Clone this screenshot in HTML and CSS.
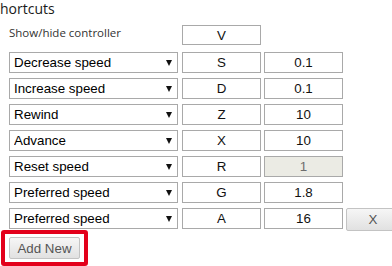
FILE: index.html
```html
<!DOCTYPE html>
<html>
<head>
<meta charset="utf-8">
<link rel="stylesheet" href="styles.css">
</head>
<body>
<div class="page">
  <h3 class="title">hortcuts</h3>
  <div class="shortcuts">
    <div class="row first">
      <span class="label">Show/hide controller</span>
      <input class="key" type="text" value="V">
    </div>
    <div class="row">
      <span class="sel"><select><option>Decrease speed</option></select></span>
      <input class="key" type="text" value="S">
      <input class="val" type="text" value="0.1">
    </div>
    <div class="row">
      <span class="sel"><select><option>Increase speed</option></select></span>
      <input class="key" type="text" value="D">
      <input class="val" type="text" value="0.1">
    </div>
    <div class="row">
      <span class="sel"><select><option>Rewind</option></select></span>
      <input class="key" type="text" value="Z">
      <input class="val" type="text" value="10">
    </div>
    <div class="row">
      <span class="sel"><select><option>Advance</option></select></span>
      <input class="key" type="text" value="X">
      <input class="val" type="text" value="10">
    </div>
    <div class="row">
      <span class="sel"><select><option>Reset speed</option></select></span>
      <input class="key" type="text" value="R">
      <input class="val" type="text" value="1" disabled>
    </div>
    <div class="row">
      <span class="sel"><select><option>Preferred speed</option></select></span>
      <input class="key" type="text" value="G">
      <input class="val" type="text" value="1.8">
    </div>
    <div class="row">
      <span class="sel"><select><option>Preferred speed</option></select></span>
      <input class="key" type="text" value="A">
      <input class="val" type="text" value="16">
      <button class="btn remove">X</button>
    </div>
  </div>
  <div class="highlight">
    <button class="btn add">Add New</button>
  </div>
</div>
</body>
</html>
```
FILE: styles.css
```css
html, body {
  margin: 0;
  padding: 0;
  background: #fff;
  overflow: hidden;
}
.page {
  width: 392px;
  height: 266px;
  overflow: hidden;
  font-family: "Liberation Sans", Arial, sans-serif;
}
.title {
  margin: 0;
  padding-top: 1px;
  height: 19px;
  font-family: "Open Sans", sans-serif;
  font-weight: normal;
  font-size: 14px;
  line-height: 15px;
  color: #1a1a1a;
}
.shortcuts {
  padding-left: 9px;
  padding-top: 5px;
  display: flex;
  flex-direction: column;
  gap: 5px;
}
.row {
  display: flex;
  align-items: flex-start;
  height: 21px;
}
.row.first {
  margin-bottom: 1px;
}
.label {
  width: 173px;
  font-family: "Open Sans", sans-serif;
  font-size: 11.5px;
  line-height: 13px;
  padding-top: 1px;
  color: #333;
}
.sel {
  position: relative;
  display: block;
  width: 169px;
  margin-right: 4px;
}
.sel select {
  -webkit-appearance: none;
  appearance: none;
  display: block;
  width: 169px;
  height: 21px;
  margin: 0;
  padding: 0 0 0 4px;
  border: 1px solid #a9a9a9;
  border-radius: 0;
  background: #fff;
  font-family: "Liberation Sans", Arial, sans-serif;
  font-size: 13.33px;
  color: #000;
}
.sel::after {
  content: "";
  position: absolute;
  right: 6px;
  top: 8px;
  width: 0;
  height: 0;
  border-left: 3.5px solid transparent;
  border-right: 3.5px solid transparent;
  border-top: 6px solid #111;
  pointer-events: none;
}
input {
  box-sizing: border-box;
  height: 21px;
  width: 79px;
  margin: 0 3px 0 0;
  padding: 0;
  border: 1px solid #a9a9a9;
  background: #fff;
  text-align: center;
  font-family: "Liberation Sans", Arial, sans-serif;
  font-size: 13.33px;
  color: #111;
  outline: none;
}
.row.first .key {
  height: 20px;
}
input:disabled {
  background: #ebebe4;
  color: #6d6d6d;
}
.btn {
  box-sizing: border-box;
  margin: 0;
  border: 1px solid #c3c3c3;
  border-radius: 2px;
  background: linear-gradient(#f6f6f6, #e1e1e1);
  font-family: "Liberation Sans", Arial, sans-serif;
  font-size: 13.33px;
  color: #555;
  padding: 0;
}
.remove {
  flex: none;
  width: 54px;
  height: 23px;
}
.highlight {
  margin-top: 1px;
  margin-left: 1px;
  width: 87px;
  box-sizing: border-box;
  border: 4px solid #e3001b;
  border-radius: 3px;
  padding: 3px 4px;
}
.add {
  display: block;
  width: 71px;
  height: 22px;
}
```
